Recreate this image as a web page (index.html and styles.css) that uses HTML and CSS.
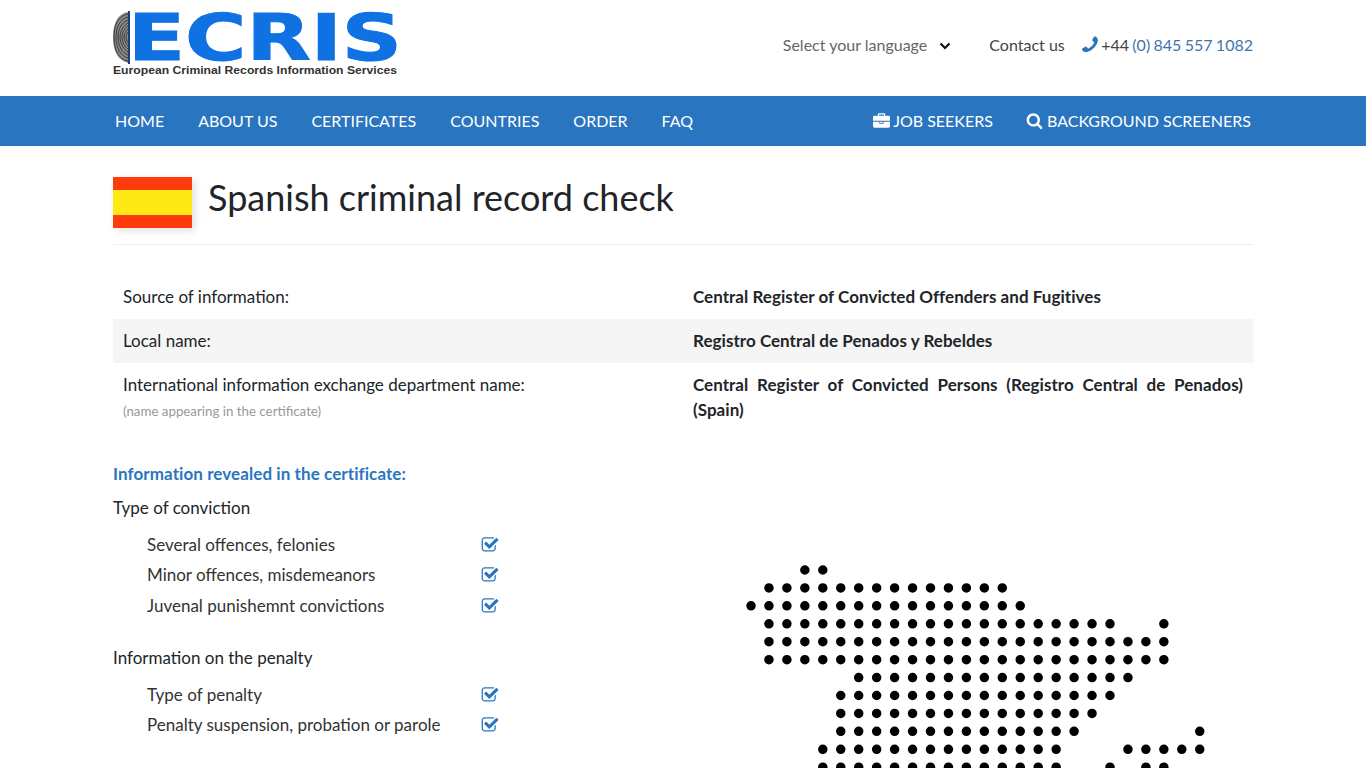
FILE: index.html
```html
<!DOCTYPE html>
<html lang="en">
<head>
  <meta charset="UTF-8">
  <meta name="viewport" content="width=device-width, initial-scale=1.0">
  <title>Spanish criminal record check</title>
  <link rel="stylesheet" href="styles.css">
</head>
<body>
  <svg class="sprite" aria-hidden="true">
    <symbol id="icon-check" viewBox="0 0 1792 1792">
      <path d="M1472 930v318q0 119-84.500 203.500t-203.500 84.500h-832q-119 0-203.500-84.500t-84.500-203.500v-832q0-119 84.500-203.500t203.500-84.500h832q63 0 117 25 15 7 18 23 3 17-9 29l-49 49q-10 10-23 10-3 0-9-2-23-6-45-6h-832q-66 0-113 47t-47 113v832q0 66 47 113t113 47h832q66 0 113-47t47-113v-254q0-13 9-22l64-64q10-10 23-10 6 0 12 3 20 8 20 29zm231-489l-814 814q-24 24-57 24t-57-24l-430-430q-24-24-24-57t24-57l110-110q24-24 57-24t57 24l263 263 647-647q24-24 57-24t57 24l110 110q24 24 24 57t-24 57z"/>
    </symbol>
  </svg>

  <header class="top container">
    <a class="logo" href="#">
      <svg width="290" height="79" viewBox="0 -9 290 79" role="img" aria-label="ECRIS logo">
        <path class="print-base" d="M15 3C4 5 0 15 0 28s4 23 15 26z"/>
        <g class="print">
          <path d="M15 5C5 7 1 16 1 28s4 22 14 24"/>
          <path d="M15 8C7 10 3 18 3 28s4 19 12 21"/>
          <path d="M15 11C9 13 5 20 5 28s4 16 10 18"/>
          <path d="M15 14C11 16 7 22 7 28s4 13 8 15"/>
          <path d="M15 17C12 19 9 23 9 28s3 10 6 12"/>
          <path d="M15 20c-2 2-4 5-4 8s2 7 4 9"/>
          <path d="M15 23c-1 2-2 3-2 5s1 4 2 6"/>
        </g>
        <rect class="logo-bar" x="15" y="2" width="2" height="53"/>
        <text class="logo-word" x="15" y="51" textLength="274" lengthAdjust="spacingAndGlyphs">ECRIS</text>
        <text class="logo-tag" x="0" y="65" textLength="284" lengthAdjust="spacingAndGlyphs">European Criminal Records Information Services</text>
      </svg>
    </a>
    <div class="top-links">
      <span class="lang">Select your language
        <svg class="chevron" width="12" height="8" viewBox="0 0 12 8"><polyline points="1.500,1.500 6,6 10.500,1.500"/></svg>
      </span>
      <a class="contact" href="#">Contact us</a>
      <span class="phone">
        <svg class="icon phone-icon" viewBox="0 0 1792 1792"><path d="M1600 1240q0 27-10 70.500t-21 68.500q-21 50-122 106-94 51-186 51-27 0-53-3.500t-57.500-12.500-47-14.500-55.500-20.500-49-18q-98-35-175-83-127-79-264-216t-216-264q-48-77-83-175-3-9-18-49t-20.500-55.500-14.500-47-12.500-57.500-3.500-53q0-92 51-186 56-101 106-122 25-11 68.500-21t70.500-10q14 0 21 3 18 6 53 76 11 19 30 54t35 63.500 31 53.500q3 4 17.500 25t21.500 35.500 7 28.500q0 20-28.500 50t-62 55-62 53-28.500 46q0 9 5 22.500t8.500 20.500 14 24 11.500 19q76 137 174 235t235 174q2 1 19 11.500t24 14 20.500 8.500 22.500 5q18 0 46-28.500t53-62 55-62 50-28.500q14 0 28.500 7t35.500 21.500 25 17.500q25 15 53.500 31t63.500 35 54 30q70 35 76 53 3 7 3 21z"/></svg>
        +44 <a href="#">(0) 845 557 1082</a>
      </span>
    </div>
  </header>

  <nav class="nav">
    <div class="container nav-inner">
      <div class="nav-group">
        <a href="#">HOME</a>
        <a href="#">ABOUT US</a>
        <a href="#">CERTIFICATES</a>
        <a href="#">COUNTRIES</a>
        <a href="#">ORDER</a>
        <a href="#">FAQ</a>
      </div>
      <div class="nav-group nav-right">
        <a href="#"><svg class="icon" viewBox="0 0 1792 1792"><path d="M640 384h512v-128h-512v128zm1152 640v480q0 66-47 113t-113 47h-1472q-66 0-113-47t-47-113v-480h672v160q0 26 19 45t45 19h320q26 0 45-19t19-45v-160h672zm-768 0v128h-256v-128h256zm768-480v384h-1792v-384q0-66 47-113t113-47h352v-160q0-40 28-68t68-28h576q40 0 68 28t28 68v160h352q66 0 113 47t47 113z"/></svg> JOB SEEKERS</a>
        <a href="#"><svg class="icon" viewBox="0 0 1792 1792"><path d="M1216 832q0-185-131.500-316.500t-316.500-131.500-316.500 131.500-131.500 316.500 131.500 316.500 316.500 131.500 316.500-131.500 131.500-316.500zm512 832q0 52-38 90t-90 38q-54 0-90-38l-343-342q-179 124-399 124-143 0-273.500-55.500t-225-150-150-225-55.500-273.500 55.500-273.500 150-225 225-150 273.500-55.500 273.500 55.500 225 150 150 225 55.500 273.500q0 220-124 399l343 343q37 37 37 90z"/></svg> BACKGROUND SCREENERS</a>
      </div>
    </div>
  </nav>

  <main class="container">
    <div class="title">
      <div class="flag"></div>
      <h1>Spanish criminal record check</h1>
    </div>

    <table class="facts">
      <tr>
        <td>Source of information:</td>
        <td class="value">Central Register of Convicted Offenders and Fugitives</td>
      </tr>
      <tr class="shaded">
        <td>Local name:</td>
        <td class="value">Registro Central de Penados y Rebeldes</td>
      </tr>
      <tr>
        <td>International information exchange department name:<small>(name appearing in the certificate)</small></td>
        <td class="value">Central Register of Convicted Persons (Registro Central de Penados) (Spain)</td>
      </tr>
    </table>

    <div class="details">
      <section class="info">
        <h2>Information revealed in the certificate:</h2>
        <h3>Type of conviction</h3>
        <ul>
          <li>Several offences, felonies <svg class="icon check"><use href="#icon-check"/></svg></li>
          <li>Minor offences, misdemeanors <svg class="icon check"><use href="#icon-check"/></svg></li>
          <li>Juvenal punishemnt convictions <svg class="icon check"><use href="#icon-check"/></svg></li>
        </ul>
        <h3>Information on the penalty</h3>
        <ul>
          <li>Type of penalty <svg class="icon check"><use href="#icon-check"/></svg></li>
          <li>Penalty suspension, probation or parole <svg class="icon check"><use href="#icon-check"/></svg></li>
        </ul>
      </section>
      <div class="map">
        <svg width="470" height="212" viewBox="0 0 470 212" role="img" aria-label="Dot map of Spain">
          <path class="dots" d="M58.85 5H76.9
            M22.95 22.93H256.4
            M5 40.86H274.35
            M22.95 58.79H364.1M417.85 58.79h.01
            M22.95 76.72H417.95
            M22.95 94.65H417.95
            M112.7 112.58H382.05
            M94.75 130.51H364.1
            M94.75 148.44H346.15
            M94.75 166.37H328.2M453.75 166.37h.01
            M76.8 184.3H310.25M381.95 184.3H453.85
            M76.8 202.23H310.25M364 202.23h.01M399.9 202.23H417.95"/>
        </svg>
      </div>
    </div>
  </main>
</body>
</html>
```

FILE: styles.css
```css
html, body {
  height: 100%;
  overflow: hidden;
}

body {
  margin: 0;
  background: #fff;
  color: #212529;
  font-family: Lato, "Liberation Sans", sans-serif;
  font-size: 17px;
  line-height: 1.5;
}

a {
  color: inherit;
  text-decoration: none;
}

.sprite {
  display: none;
}

.container {
  width: 1140px;
  margin: 0 auto;
}

.icon {
  width: 1em;
  height: 1em;
  fill: currentColor;
  vertical-align: -0.12em;
}

/* header */
.top {
  display: flex;
  justify-content: space-between;
  align-items: center;
  height: 96px;
}

.logo {
  display: block;
  align-self: flex-start;
}

.logo svg {
  display: block;
}

.print-base {
  fill: #8a8a8a;
}

.print path {
  fill: none;
  stroke: #3a3a3a;
  stroke-width: 1;
}

.logo-bar {
  fill: #1c3f73;
}

.logo-word {
  fill: #0f71e2;
  stroke: #0f71e2;
  stroke-width: 1px;
  font-family: "DejaVu Sans", sans-serif;
  font-size: 64px;
  font-weight: 700;
}

.logo-tag {
  fill: #333;
  font-family: "Liberation Sans", sans-serif;
  font-size: 11.500px;
  font-weight: 700;
}

.top-links {
  display: flex;
  align-items: center;
  padding-bottom: 6px;
  font-size: 16px;
}

.lang {
  color: #666;
  margin-right: 38px;
}

.chevron {
  margin-left: 8px;
  vertical-align: 1px;
}

.chevron polyline {
  fill: none;
  stroke: #111;
  stroke-width: 2.200;
}

.contact {
  color: #444;
  margin-right: 15px;
}

.phone {
  color: #444;
  word-spacing: -0.75px;
}

.phone a {
  color: #3f74ad;
}

.phone-icon {
  color: #2a75c0;
  width: 20px;
  height: 20px;
  margin-right: -2px;
  vertical-align: -4px;
  transform: scaleX(-1);
}

/* nav */
.nav {
  background: #2a75c0;
  height: 50px;
}

.nav-inner {
  display: flex;
  justify-content: space-between;
  height: 100%;
}

.nav-group {
  display: flex;
  align-items: center;
  gap: 34px;
  padding: 0 2px;
}

.nav-right {
  gap: 33px;
}

.nav-group a {
  color: #fff;
  font-size: 16px;
}

.nav-group .icon {
  width: 17px;
  height: 17px;
}

/* title */
.title {
  display: flex;
  align-items: center;
  gap: 16px;
  box-sizing: border-box;
  height: 99px;
  padding-top: 6px;
  border-bottom: 1px solid #eee;
}

.flag {
  width: 79px;
  height: 51px;
  margin-top: 8px;
  background: linear-gradient(#ff3a0d 0 25%, #ffe914 25% 75%, #ff3a0d 75%);
  box-shadow: 3px 3px 8px rgba(0, 0, 0, .12);
}

h1 {
  margin: 0;
  font-size: 36px;
  font-weight: 400;
  line-height: 1.2;
  color: #212529;
}

/* facts table */
.facts {
  width: 100%;
  margin-top: 30px;
  border-collapse: collapse;
  table-layout: fixed;
}

.facts td {
  padding: 9px 10px 10px;
  vertical-align: top;
  line-height: 25px;
}

.shaded {
  background: #f5f5f5;
}

.value {
  font-weight: 700;
  letter-spacing: .04px;
  text-align: justify;
}

.facts small {
  display: block;
  margin-top: 2px;
  color: #999;
  font-size: 13.300px;
}

/* details */
.details {
  display: flex;
  margin-top: 27px;
}

.info {
  width: 570px;
}

h2 {
  margin: 0 0 8px;
  color: #2a75c0;
  font-size: 17px;
  font-weight: 700;
  letter-spacing: .08px;
  line-height: 26px;
}

h3 {
  margin: 0;
  font-size: 17px;
  font-weight: 400;
  line-height: 25px;
}

ul {
  list-style: none;
  width: 352px;
  margin: 9.400px 0 24px;
  padding: 0 0 0 34px;
}

li {
  display: flex;
  justify-content: space-between;
  align-items: center;
  color: #333;
  height: 30.500px;
}

.check {
  color: #2a75c0;
  width: 18px;
  height: 18px;
}

.map {
  padding: 104px 0 0 63px;
}

.dots {
  fill: none;
  stroke: #000;
  stroke-width: 9.500px;
  stroke-linecap: round;
  stroke-dasharray: 0 17.950;
}
```
